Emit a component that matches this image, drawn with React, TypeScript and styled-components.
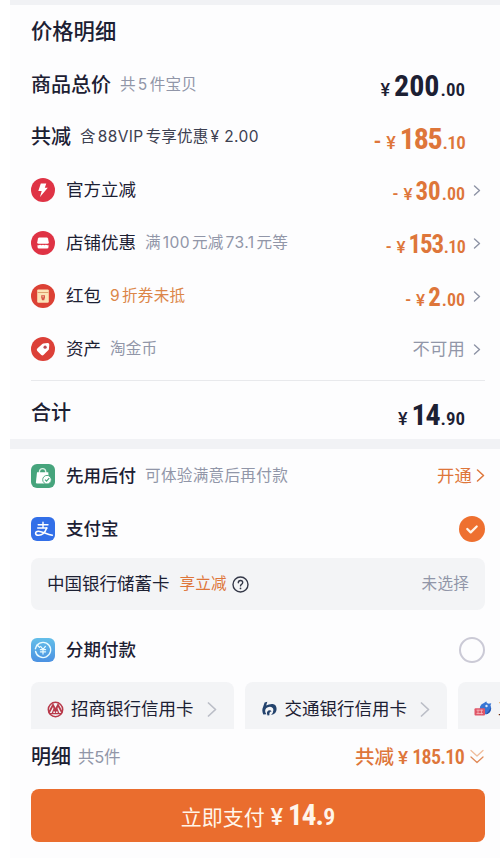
import React from "react";
import styled, { createGlobalStyle } from "styled-components";

const ink = "#1c2033";
const muted = "#9196a8";
const orange = "#de763a";
const cjk = `"Noto Sans CJK SC", sans-serif`;

const GlobalStyle = createGlobalStyle`
  * { box-sizing: border-box; }
  body { margin: 0; background: #fff; overflow: hidden; }
  svg { display: block; flex: none; }
`;

const Page = styled.main`
  width: 490px;
  height: 858px;
  margin-left: 10px;
  overflow: hidden;
  display: flex;
  flex-direction: column;
  background: #fdfdfe;
  color: ${ink};
  font-family: Inter, ${cjk};
  white-space: nowrap;
`;

const Band = styled.div<{ $h: number }>`
  flex: none;
  height: ${(p) => p.$h}px;
  background: #f1f2f5;
`;

const Section = styled.section`
  flex: none;
  display: flex;
  flex-direction: column;
  padding: 0 15px 0 21px;
`;

const Title = styled.h1`
  margin: 0;
  height: 53px;
  line-height: 53px;
  font-size: 21.3px;
  font-weight: 500;
`;

const Row = styled.div<{ $h?: number; $top?: number }>`
  flex: none;
  display: flex;
  align-items: center;
  height: ${(p) => p.$h ?? 53}px;
  padding-top: ${(p) => p.$top ?? 0}px;
`;

const Label = styled.span<{ $size?: number; $weight?: number; $gap?: number }>`
  font-size: ${(p) => p.$size ?? 17.5}px;
  font-weight: ${(p) => p.$weight ?? 400};
  line-height: 26px;
  margin-left: ${(p) => p.$gap ?? 0}px;
`;

const Note = styled.span<{ $color?: string; $size?: number; $gap?: number; $track?: number }>`
  margin-left: ${(p) => p.$gap ?? 9}px;
  font-size: ${(p) => p.$size ?? 15.6}px;
  line-height: 24px;
  letter-spacing: ${(p) => p.$track ?? 0.2}px;
  color: ${(p) => p.$color ?? muted};
`;

const Num = styled.span<{ $first?: boolean }>`
  margin: 0 2px 0 ${(p) => (p.$first ? 0 : 2)}px;
  letter-spacing: 0.4px;
`;

const Spacer = styled.span`
  flex: 1;
`;

const Rule = styled.hr`
  width: 100%;
  height: 1px;
  margin: 4.5px 0 0;
  border: 0;
  background: #e8e9ec;
`;

const MoneyBox = styled.span<{ $color: string; $drop: number }>`
  display: flex;
  align-items: baseline;
  margin: ${(p) => p.$drop}px 20px 0 0;
  color: ${(p) => p.$color};
  font-family: Roboto, ${cjk};
  font-weight: 700;
  line-height: 30px;
`;

const Digits = styled.span<{ $size: number; $track?: number; $gap?: number; $weight?: number; $stretch?: number }>`
  font-size: ${(p) => p.$size}px;
  font-stretch: ${(p) => p.$stretch ?? 85}%;
  letter-spacing: ${(p) => p.$track ?? 0}px;
  margin-left: ${(p) => p.$gap ?? 0}px;
  font-weight: ${(p) => p.$weight ?? 700};
`;

const ArrowSlot = styled.span`
  width: 20px;
  height: 16px;
  display: flex;
  justify-content: flex-end;
  align-items: center;
  padding-right: 4px;
`;

const RowEnd = styled.span`
  display: flex;
  align-items: center;
  ${MoneyBox} { margin-right: 0; }
`;

const Tile = styled.span<{ $bg: string; $round?: boolean }>`
  width: 24px;
  height: 24px;
  flex: none;
  border-radius: ${(p) => (p.$round ? "50%" : "6px")};
  background: ${(p) => p.$bg};
`;

const Checked = styled.span`
  width: 26px;
  height: 26px;
  border-radius: 50%;
  background: #ee7030;
`;

const Unchecked = styled.span`
  width: 26px;
  height: 26px;
  border-radius: 50%;
  border: 2px solid #cbcad6;
`;

const BankBar = styled.div`
  flex: none;
  display: flex;
  align-items: center;
  height: 52px;
  margin-top: 3px;
  padding: 0 16px;
  border-radius: 8px;
  background: #f3f4f6;
`;

const CardStrip = styled.div`
  flex: none;
  display: flex;
  gap: 11px;
  height: 47px;
  margin-top: 6px;
  padding-left: 21px;
  overflow: hidden;
`;

const BankCard = styled.div`
  flex: none;
  display: flex;
  align-items: center;
  width: 202.5px;
  height: 54px;
  padding: 0 17px 0 16px;
  border-radius: 8px;
  background: #f3f4f6;
`;

const Footer = styled.footer`
  flex: none;
  padding: 0 15px 0 21px;
`;

const PayButton = styled.button`
  display: flex;
  align-items: baseline;
  justify-content: center;
  width: 454px;
  height: 53px;
  margin-top: 7px;
  padding: 0;
  border: 0;
  border-radius: 8px;
  background: #ea6d2e;
  color: #fff5ea;
  font-family: Roboto, ${cjk};
  line-height: 53px;
`;

const PayText = styled.span`
  font-family: ${cjk};
  font-size: 21px;
  font-weight: 400;
`;

const Chevron = ({ w = 6, h = 9, color = "#8d93a5", sw = 1.4 }: { w?: number; h?: number; color?: string; sw?: number }) => (
  <svg width={w + 2} height={h + 2} viewBox={`-1 -1 ${w + 2} ${h + 2}`} fill="none" stroke={color} strokeWidth={sw} strokeLinecap="round" strokeLinejoin="round">
    <path d={`M0.5 0L${w - 0.5} ${h / 2}L0.5 ${h}`} />
  </svg>
);

const BoltIcon = () => (
  <svg width="24" height="24" viewBox="0 0 24 24">
    <path d="M9.8 5.400h5.500l-1.500 4.300h3L9 19l1.700-5.900H7.300z" fill="#fff" />
  </svg>
);

const ShopIcon = () => (
  <svg width="24" height="24" viewBox="0 0 24 24">
    <path d="M8.3 6.400h7.400q1 0 1.300 1l.8 4.200q0 1.200-1.500 1.200H7.700q-1.500 0-1.500-1.200L7 7.400q.3-1 1.300-1z" fill="#fff" />
    <path d="M6.500 14q1.300.5 2.700-.3 1.400.9 2.800 0 1.400.9 2.800 0 1.400.8 2.700.3v1.900q0 1.700-1.500 1.700H8q-1.500 0-1.500-1.700z" fill="#fff" />
  </svg>
);

const EnvelopeIcon = () => (
  <svg width="24" height="24" viewBox="0 0 24 24">
    <rect x="6.200" y="5.400" width="11.600" height="13.400" rx="1.200" fill="#fbe3b8" />
    <path d="M6.600 8.500h10.800" stroke="#d99a68" strokeWidth=".9" />
    <path d="M10.200 11.200h3.800v2.400l-.8 2.600h-2.200l-.8-2.600z" fill="#d8584a" />
    <path d="M11.200 12.800h1.800" stroke="#fbe3b8" strokeWidth=".7" />
  </svg>
);

const TagIcon = () => (
  <svg width="24" height="24" viewBox="0 0 24 24">
    <path d="M12.300 6.600l4.300-.6q1.700-.1 1.700 1.500l-.4 4.700q-.1.500-.5.900l-4.700 4.700q-1.200 1.100-2.400.1l-4-4q-1.100-1.200 0-2.300l5-4.500q.4-.4 1-.5z" fill="#fff" />
    <circle cx="14.100" cy="10.200" r="1.600" fill="#b74b55" />
  </svg>
);

const BagIcon = () => (
  <svg width="24" height="24" viewBox="0 0 24 24">
    <path d="M8.400 9.500V7.700q.3-3 3.200-3t3.200 3v1.800" fill="none" stroke="#dff2e8" strokeWidth="1.300" />
    <path d="M6 8.300h11.300l.5 10.300q0 1-1 1H6q-1.100 0-1.100-1z" fill="#fff" />
    <circle cx="16" cy="15.700" r="4.300" fill="#fff" stroke="#46a47c" strokeWidth=".9" />
    <path d="M14 15.700l1.500 1.500 2.700-3" fill="none" stroke="#46a47c" strokeWidth="1.200" />
  </svg>
);

const AlipayIcon = () => (
  <svg width="24" height="24" viewBox="0 0 24 24" fill="none" stroke="#fff" strokeLinecap="round">
    <path d="M7.200 7.800h9.800M12 5.200v5.700M6.700 11h9.200" strokeWidth="1.400" />
    <path d="M15.700 11c-1.200 3.300-4.200 7.300-8 7.300-4.200 0-3.900-4.100-.4-4.100 3.400 0 7.700 2.600 14 4" strokeWidth="1.600" />
  </svg>
);

const InstalmentIcon = () => (
  <svg width="24" height="24" viewBox="0 0 24 24" fill="none" stroke="#e9fbff" strokeLinecap="round" strokeLinejoin="round">
    <path d="M6.100 7.200A7.600 7.600 0 1 1 4.600 13.500M4.400 10.800l1.500-3.800 2.700 2.300" strokeWidth="1.400" />
    <path d="M9.600 8.400l2.400 3 2.400-3M9.400 11.700h5.200M9.400 13.800h5.200M12 11.700v4.400" strokeWidth="1.200" />
  </svg>
);

const MerchantsLogo = () => (
  <svg width="17" height="17" viewBox="0 0 17 17">
    <circle cx="8.500" cy="8.500" r="7.200" fill="none" stroke="#b8394a" strokeWidth="1.500" />
    <path d="M2 11.500L6 4l2.500 5L11 4l4 7.500" fill="none" stroke="#b8394a" strokeWidth="1.800" />
    <path d="M5 13l2-5 1.500 3L10 8l2 5M2.500 12.600h12" fill="none" stroke="#b8394a" strokeWidth="1.300" />
  </svg>
);

const CommLogo = () => (
  <svg width="17" height="17" viewBox="0 0 17 17">
    <path d="M3.600 1.500L6.300.800 5.200 4.500Q8 2.800 11.600 3q4 .7 4 5.100 0 5-5.600 5.900 2.500-2.500 2.400-5.100-.3-3-3.600-3.200-4.400.3-4.700 4.200.2 2 1.300 3.300L2.300 13.500Q.5 9.300 2 6.200z" fill="#24436d" />
    <path d="M6.600 14.500q-1.700-3.300.8-4.900 2.200-.9 3.200 1-2.600-.3-2.200 3.700z" fill="#24436d" />
  </svg>
);

const MascotLogo = () => (
  <svg width="18" height="17" viewBox="0 0 18 17">
    <circle cx="11.500" cy="7.500" r="5.700" fill="#3875d4" />
    <path d="M10 1.500l2.500-1 .4 2zM14.300 2.800l3-.5-1.300 3.200z" fill="#3875d4" />
    <path d="M11.500 13.500q5.500-.7 5.300-7l-2.300 4z" fill="#244ca2" />
    <circle cx="12.500" cy="5" r="1.200" fill="#dbe8fa" />
    <rect x=".5" y="7.200" width="10.500" height="7.300" rx="1" fill="#df5668" />
    <path d="M2.500 9.200h6.500M2.500 12.500h6.500M4 8.700v4.500M7.500 8.700v4.500" stroke="#f6b8bc" strokeWidth=".8" />
  </svg>
);

const HelpIcon = () => (
  <svg width="17" height="17" viewBox="0 0 17 17" fill="none" stroke="#343848" strokeWidth="1.400" strokeLinecap="round">
    <circle cx="8.500" cy="8.500" r="7.500" />
    <path d="M6.300 6.700q0-2.200 2.200-2.200t2.200 2q0 1.100-1.200 1.800-1 .6-1 1.600" />
    <path d="M8.500 12.300v.1" strokeWidth="1.700" />
  </svg>
);

const DoubleDown = () => (
  <svg width="16" height="16" viewBox="0 0 16 16" fill="none" strokeWidth="1.300" strokeLinecap="round" strokeLinejoin="round">
    <path d="M2 1.500l6 5.500 6-5.500" stroke="#efbd9c" />
    <path d="M2 8l6 5.500L14 8" stroke="#e08a58" />
  </svg>
);

type MoneyProps = { whole: string; cents: string; minus?: boolean; large?: boolean; dark?: boolean };

/* A "1" leaves wide side bearings, so amounts holding one are set tighter. */
const tracking = (text: string, base: number, tight: number) => (text.includes("1") ? tight : base);

const Money = ({ whole, cents, minus, large, dark }: MoneyProps) => (
  <MoneyBox $color={dark ? ink : orange} $drop={large ? 7 : 5}>
    {minus && <Digits $size={large ? 24 : 19} $weight={500}>-</Digits>}
    <Digits $size={large ? 18 : 17} $gap={minus ? 5 : 0} $weight={500} $stretch={100}>¥</Digits>
    <Digits $size={large ? 30 : 25} $gap={large ? 4 : 3} $track={tracking(whole, 0, -1.2)} $stretch={large ? 87 : 84}>{whole}</Digits>
    <Digits $size={large ? 19 : 18} $gap={1} $track={tracking(cents, 0, -0.7)} $weight={600} $stretch={82}>{cents}</Digits>
  </MoneyBox>
);

const Arrow = () => (
  <ArrowSlot>
    <Chevron />
  </ArrowSlot>
);

export default function App() {
  return (
    <>
      <GlobalStyle />
      <Page>
        <Band $h={5} />
        <Section>
          <Title>价格明细</Title>
          <Row>
            <Label $size={20} $weight={500}>商品总价</Label>
            <Note>共<Num>5</Num>件宝贝</Note>
            <Spacer />
            <Money whole="200" cents=".00" large dark />
          </Row>
          <Row $h={52.5}>
            <Label $size={20} $weight={500}>共减</Label>
            <Note $color="#3c4050" $size={15.5}>含<Num>88VIP</Num>专享优惠<Num>¥ 2.00</Num></Note>
            <Spacer />
            <Money whole="185" cents=".10" large minus />
          </Row>
          <Row>
            <Tile $bg="#df3345" $round><BoltIcon /></Tile>
            <Label $gap={11}>官方立减</Label>
            <Spacer />
            <RowEnd><Money whole="30" cents=".00" minus /><Arrow /></RowEnd>
          </Row>
          <Row>
            <Tile $bg="#df3345" $round><ShopIcon /></Tile>
            <Label $gap={11}>店铺优惠</Label>
            <Note>满<Num>100</Num>元减<Num>73.1</Num>元等</Note>
            <Spacer />
            <RowEnd><Money whole="153" cents=".10" minus /><Arrow /></RowEnd>
          </Row>
          <Row>
            <Tile $bg="#dc4135" $round><EnvelopeIcon /></Tile>
            <Label $gap={11}>红包</Label>
            <Note $color="#dc8648"><Num $first>9</Num>折券未抵</Note>
            <Spacer />
            <RowEnd><Money whole="2" cents=".00" minus /><Arrow /></RowEnd>
          </Row>
          <Row>
            <Tile $bg="#dc4038" $round><TagIcon /></Tile>
            <Label $gap={11}>资产</Label>
            <Note>淘金币</Note>
            <Spacer />
            <Note $size={17.3}>不可用</Note>
            <Arrow />
          </Row>
          <Rule />
          <Row $h={58} $top={6}>
            <Label $size={20} $weight={500}>合计</Label>
            <Spacer />
            <Money whole="14" cents=".90" large dark />
          </Row>
        </Section>
        <Band $h={10} />
        <Section>
          <Row>
            <Tile $bg="#46a47c"><BagIcon /></Tile>
            <Label $gap={11} $weight={500}>先用后付</Label>
            <Note $track={0.3}>可体验满意后再付款</Note>
            <Spacer />
            <Note $color={orange} $size={17.3}>开通</Note>
            <Note $gap={4}><Chevron w={7} h={11} color={orange} sw={1.5} /></Note>
          </Row>
          <Row>
            <Tile $bg="#326fe8"><AlipayIcon /></Tile>
            <Label $gap={11} $weight={500}>支付宝</Label>
            <Spacer />
            <Checked>
              <svg width="26" height="26" viewBox="0 0 26 26" fill="none" stroke="#fff5ea" strokeWidth="2.300" strokeLinecap="round" strokeLinejoin="round">
                <path d="M8.300 13l3.400 3.300 6-5.800" />
              </svg>
            </Checked>
          </Row>
          <BankBar>
            <Label>中国银行储蓄卡</Label>
            <Note $color={orange} $gap={10}>享立减</Note>
            <Note $gap={5}><HelpIcon /></Note>
            <Spacer />
            <Note $track={0.2}>未选择</Note>
          </BankBar>
          <Row $h={66} $top={14}>
            <Tile $bg="linear-gradient(#64bfe9, #4b91e2)"><InstalmentIcon /></Tile>
            <Label $gap={11} $weight={500}>分期付款</Label>
            <Spacer />
            <Unchecked />
          </Row>
        </Section>
        <CardStrip>
          <BankCard>
            <MerchantsLogo />
            <Label $gap={7}>招商银行信用卡</Label>
            <Spacer />
            <Chevron w={8} h={13} color="#bbbec7" sw={1.700} />
          </BankCard>
          <BankCard>
            <CommLogo />
            <Label $gap={7}>交通银行信用卡</Label>
            <Spacer />
            <Chevron w={8} h={13} color="#bbbec7" sw={1.700} />
          </BankCard>
          <BankCard>
            <MascotLogo />
            <Label $gap={6}>工商银行信用卡</Label>
          </BankCard>
        </CardStrip>
        <Footer>
          <Row $top={3}>
            <Label $size={20} $weight={500}>明细</Label>
            <Note $gap={7} $size={16.5} $track={-0.3}>共5件</Note>
            <Spacer />
            <RowEnd>
              <MoneyBox $color={orange} $drop={1}>
                <Digits $size={19.5} $weight={500}>共减</Digits>
                <Digits $size={19} $gap={4} $weight={500} $stretch={100}>¥</Digits>
                <Digits $size={20} $gap={4} $weight={600} $track={-0.7} $stretch={83}>185.10</Digits>
              </MoneyBox>
              <Note $gap={5}><DoubleDown /></Note>
            </RowEnd>
          </Row>
          <PayButton>
            <PayText>立即支付</PayText>
            <Digits $size={23} $gap={6} $weight={500} $stretch={100}>¥</Digits>
            <Digits $size={29} $gap={5} $track={-0.8}>14.</Digits>
            <Digits $size={24} $weight={600}>9</Digits>
          </PayButton>
        </Footer>
      </Page>
    </>
  );
}
